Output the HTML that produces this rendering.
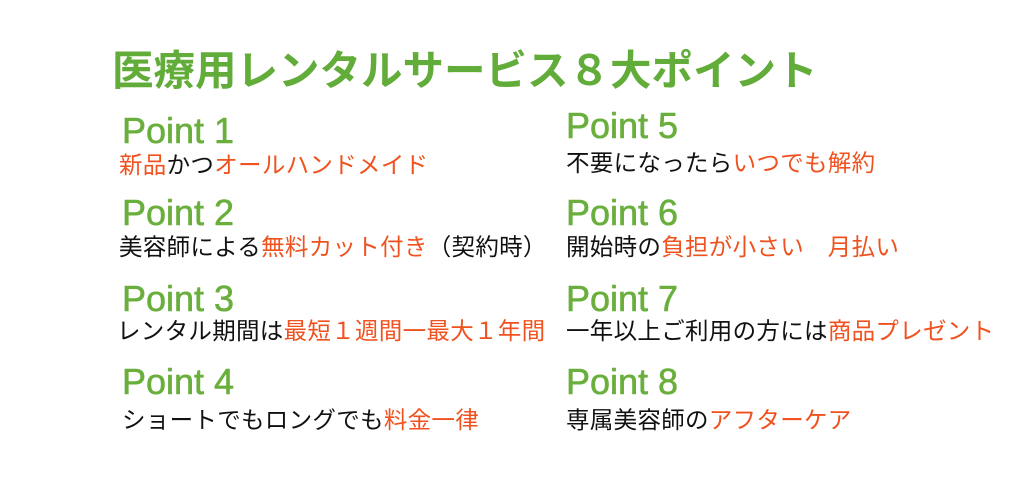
<!DOCTYPE html>
<html><head><meta charset="utf-8"><style>
body{margin:0;width:1024px;height:500px;background:#fff;position:relative;overflow:hidden;font-family:"Liberation Sans","Noto Sans CJK JP",sans-serif}
div{position:absolute;white-space:nowrap;line-height:1}
.t{left:112px;top:50px;font-size:41.5px;font-weight:bold;color:#62ac3a;letter-spacing:0px}
.p{font-size:36px;color:#6aaf3d;-webkit-text-stroke:0.6px #6aaf3d}
.s{font-size:23.5px;color:#111;letter-spacing:0.3px}
.o{color:#f0521f}
</style></head><body>
<div class="t">医療用レンタルサービス８大ポイント</div>
<div class="p" style="left:122px;top:113px">Point 1</div>
<div class="s" style="left:119px;top:154px"><span class="o">新品</span>かつ<span class="o">オールハンドメイド</span></div>
<div class="p" style="left:122px;top:195px">Point 2</div>
<div class="s" style="left:119px;top:236px">美容師による<span class="o">無料カット付き</span>（契約時）</div>
<div class="p" style="left:122px;top:281px">Point 3</div>
<div class="s" style="left:117px;top:320px">レンタル期間は<span class="o">最短１週間一最大１年間</span></div>
<div class="p" style="left:122px;top:364px">Point 4</div>
<div class="s" style="left:122px;top:409px">ショートでもロングでも<span class="o">料金一律</span></div>
<div class="p" style="left:566px;top:108px">Point 5</div>
<div class="s" style="left:566px;top:152px">不要になったら<span class="o">いつでも解約</span></div>
<div class="p" style="left:566px;top:195px">Point 6</div>
<div class="s" style="left:566px;top:236px">開始時の<span class="o">負担が小さい　月払い</span></div>
<div class="p" style="left:566px;top:281px">Point 7</div>
<div class="s" style="left:566px;top:320px">一年以上ご利用の方には<span class="o">商品プレゼント</span></div>
<div class="p" style="left:566px;top:364px">Point 8</div>
<div class="s" style="left:566px;top:409px">専属美容師の<span class="o">アフターケア</span></div>
</body></html>
